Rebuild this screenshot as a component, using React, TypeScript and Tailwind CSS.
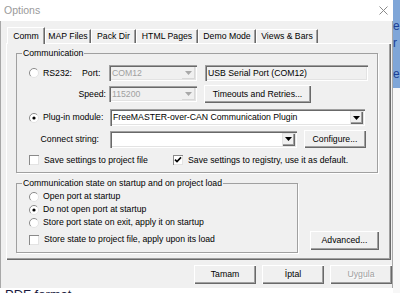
import type { ReactNode } from 'react';

const TABS = [
    { label: 'Comm', w: 'w-[38px]' },
    { label: 'MAP Files', w: 'w-[46px]' },
    { label: 'Pack Dir', w: 'w-[45px]' },
    { label: 'HTML Pages', w: 'w-[62px]' },
    { label: 'Demo Mode', w: 'w-[58px]' },
    { label: 'Views & Bars', w: 'w-[62px]' },
];

function Radio({ checked }: { checked?: boolean }) {
    return (
        <svg width="10" height="10" viewBox="0 0 10 10" className="shrink-0">
            <circle cx="5" cy="5" r="4.5" fill="#fff" />
            <path d="M1.8 8.2 A4.5 4.5 0 0 1 8.2 1.8" fill="none" stroke="#8a8a8a" />
            <path d="M8.2 1.8 A4.5 4.5 0 0 1 1.8 8.2" fill="none" stroke="#e3e3e3" />
            {checked && <circle cx="5" cy="5" r="1.6" fill="#000" />}
        </svg>
    );
}

function Check({ checked }: { checked?: boolean }) {
    return (
        <span className="flex h-[10px] w-[10px] shrink-0 items-center justify-center bg-white shadow-[inset_1px_1px_0_#8a8a8a,inset_-1px_-1px_0_#e3e3e3]">
            {checked && (
                <svg width="8" height="8" viewBox="0 0 8 8">
                    <path d="M1 3.6 L3 5.6 L7 1.4" stroke="#000" strokeWidth="1.6" fill="none" />
                </svg>
            )}
        </span>
    );
}

function Arrow({ disabled }: { disabled?: boolean }) {
    return (
        <svg width="7" height="4" viewBox="0 0 7 4">
            <path d="M0 0H7L3.5 4Z" fill={disabled ? '#a8a8a8' : '#000'} />
        </svg>
    );
}

function Btn({ className, children, disabled }: { className: string; children: ReactNode; disabled?: boolean }) {
    return (
        <div
            className={`flex items-center justify-center bg-[#f0f0f0] shadow-[inset_1px_1px_0_#ffffff,inset_-1px_-1px_0_#696969,inset_-2px_-2px_0_#a0a0a0] ${disabled ? 'text-[#a0a0a0] [text-shadow:1px_1px_0_#fff]' : ''} ${className}`}
        >
            {children}
        </div>
    );
}

function Field({ className, children }: { className: string; children: ReactNode }) {
    return (
        <div
            className={`flex items-center bg-[#f0f0f0] pl-[3px] shadow-[inset_1px_1px_0_#a0a0a0,inset_2px_2px_0_#696969,inset_-1px_-1px_0_#ffffff,inset_-2px_-2px_0_#e3e3e3] ${className}`}
        >
            {children}
        </div>
    );
}

function Combo({ className, text, disabled }: { className: string; text: string; disabled?: boolean }) {
    return (
        <div
            className={`flex items-stretch p-[2px] shadow-[inset_1px_1px_0_#a0a0a0,inset_2px_2px_0_#696969,inset_-1px_-1px_0_#ffffff,inset_-2px_-2px_0_#e3e3e3] ${disabled ? 'bg-[#f0f0f0] text-[#a0a0a0]' : 'bg-white text-black'} ${className}`}
        >
            <span className="flex flex-1 items-center overflow-hidden whitespace-nowrap pl-[1px]">{text}</span>
            <span
                className={`flex w-[13px] items-center justify-center bg-[#f0f0f0] ${disabled ? 'shadow-[inset_-1px_-1px_0_#d8d8d8]' : 'shadow-[inset_1px_1px_0_#e3e3e3,inset_-1px_-1px_0_#696969,inset_-2px_-2px_0_#a0a0a0]'}`}
            >
                <Arrow disabled={disabled} />
            </span>
        </div>
    );
}

export default function App() {
    return (
        <div className="flex h-[293px] w-[400px] overflow-hidden bg-white font-['Liberation_Sans',Arial,sans-serif] text-[8.7px] leading-[11px] text-black">
            <div className="flex w-[393px] flex-col">
                {/* title bar */}
                <div className="flex h-[21px] items-center justify-between bg-white pl-[4px] pr-[5px]">
                    <span className="text-[10.5px] text-[#9a9a9a]">Options</span>
                    <svg width="9" height="9" viewBox="0 0 9 9">
                        <path d="M0.5 0.5L8.5 8.5M8.5 0.5L0.5 8.5" stroke="#8a8a8a" />
                    </svg>
                </div>

                {/* dialog body */}
                <div className="flex h-[267px] flex-col border-x border-[#a8a8a8] bg-[#f0f0f0] pl-[5px]">
                    <div className="mt-[6px] flex h-[16px] items-end pl-[1px]">
                        {TABS.map((t, i) =>
                            i === 0 ? (
                                <div
                                    key={t.label}
                                    className={`relative z-10 -mb-px flex h-[17px] items-center justify-center border-l border-t border-r border-white border-r-[#696969] bg-[#f0f0f0] shadow-[inset_-1px_0_0_#a0a0a0] ${t.w}`}
                                >
                                    {t.label}
                                </div>
                            ) : (
                                <div
                                    key={t.label}
                                    className={`flex h-[14px] items-center justify-center border-l border-t border-r border-white border-r-[#696969] shadow-[inset_-1px_0_0_#a0a0a0] ${t.w}`}
                                >
                                    {t.label}
                                </div>
                            ),
                        )}
                    </div>

                    <div className="flex h-[217px] w-[385px] flex-col border-l border-t border-white bg-[#f0f0f0] pl-[9px] pt-[4px] shadow-[inset_-1px_-1px_0_#696969,inset_-2px_-2px_0_#a0a0a0]">
                        <fieldset className="h-[125px] w-[362px] border border-[#a0a0a0] shadow-[1px_1px_0_#fff]">
                            <legend className="ml-[5px] px-[1px]">Communication</legend>
                            <div className="flex flex-col pl-[12px]">
                                <div className="mt-[6px] flex h-[16px] items-center">
                                    <span className="flex w-[14px]"><Radio /></span>
                                    <span className="w-[39px]">RS232:</span>
                                    <span className="w-[27px]">Port:</span>
                                    <Combo className="h-[16px] w-[88px]" text="COM12" disabled />
                                    <Field className="ml-[8px] h-[16px] w-[163px]">USB Serial Port (COM12)</Field>
                                </div>
                                <div className="mt-[4px] flex h-[18px] items-center">
                                    <span className="w-[80px] pr-[3px] text-right">Speed:</span>
                                    <Combo className="h-[16px] w-[88px]" text="115200" disabled />
                                    <Btn className="ml-[7px] h-[18px] w-[107px]">Timeouts and Retries...</Btn>
                                </div>
                                <div className="mt-[6px] flex h-[17px] items-center">
                                    <span className="flex w-[14px]"><Radio checked /></span>
                                    <span className="w-[67px]">Plug-in module:</span>
                                    <Combo className="h-[17px] w-[255px]" text="FreeMASTER-over-CAN Communication Plugin" />
                                </div>
                                <div className="mt-[4px] flex h-[18px] items-center">
                                    <span className="w-[81px] pr-[11px] text-right">Connect string:</span>
                                    <Combo className="h-[17px] w-[187px]" text="" />
                                    <Btn className="ml-[7px] h-[18px] w-[62px]">Configure...</Btn>
                                </div>
                                <div className="mt-[7px] flex h-[10px] items-center">
                                    <div className="flex w-[144px] items-center">
                                        <Check />
                                        <span className="ml-[5px]">Save settings to project file</span>
                                    </div>
                                    <Check checked />
                                    <span className="ml-[5px]">Save settings to registry, use it as default.</span>
                                </div>
                            </div>
                        </fieldset>

                        <div className="mt-[5px] flex items-end">
                            <fieldset className="h-[75px] w-[282px] border border-[#a0a0a0] shadow-[1px_1px_0_#fff]">
                                <legend className="ml-[5px] px-[1px]">Communication state on startup and on project load</legend>
                                <div className="flex flex-col pl-[12px] pt-[1px]">
                                    <div className="flex h-[13px] items-center">
                                        <Radio />
                                        <span className="ml-[4px]">Open port at startup</span>
                                    </div>
                                    <div className="flex h-[13px] items-center">
                                        <Radio checked />
                                        <span className="ml-[4px]">Do not open port at startup</span>
                                    </div>
                                    <div className="flex h-[13px] items-center">
                                        <Radio />
                                        <span className="ml-[4px]">Store port state on exit, apply it on startup</span>
                                    </div>
                                    <div className="mt-[4px] flex h-[13px] items-center">
                                        <Check />
                                        <span className="ml-[5px]">Store state to project file, apply upon its load</span>
                                    </div>
                                </div>
                            </fieldset>
                            <Btn className="mb-[3px] ml-[12px] h-[19px] w-[69px]">Advanced...</Btn>
                        </div>
                    </div>

                    <div className="mt-[5px] flex h-[19px] justify-end gap-[6px]">
                        <Btn className="h-[19px] w-[62px]">Tamam</Btn>
                        <Btn className="h-[19px] w-[62px]">İptal</Btn>
                        <Btn className="h-[19px] w-[62px]" disabled>Uygula</Btn>
                    </div>
                </div>

                {/* what lies below the dialog */}
                <div className="h-[5px] overflow-hidden bg-white pl-[5px]">
                    <div className="-mt-[1px] text-[13px] leading-[15px] text-[#1a1a40]">PDF format</div>
                </div>
            </div>

            {/* window behind, on the right */}
            <div className="flex w-[7px] flex-col">
                <div className="flex h-[88px] flex-col overflow-hidden bg-[#7fa6d8] pt-[18px] text-[12px] leading-[17px] text-[#1c3f94]">
                    <span>e</span>
                    <span>r</span>
                    <span className="mt-[14px]">e</span>
                </div>
                <div className="flex-1 bg-[#f7f7f7]" />
            </div>
        </div>
    );
}
